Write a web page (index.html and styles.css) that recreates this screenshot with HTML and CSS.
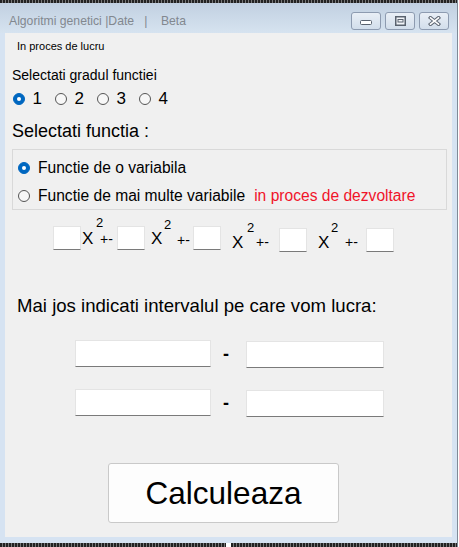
FILE: index.html
```html
<!DOCTYPE html>
<html>
<head>
<meta charset="utf-8">
<link rel="stylesheet" href="styles.css">
</head>
<body>
<div class="window">
  <div class="topstrip"></div>
  <div class="titlebar">
    <div class="title">Algoritmi genetici |Date   |    Beta</div>
    <div class="controls">
      <div class="cbtn cmin"><svg width="12" height="5" viewBox="0 0 12 5"><rect x="0.5" y="0.5" width="11" height="4" rx="1" fill="#ffffff" stroke="#59626e"/></svg></div>
      <div class="cbtn"><svg width="11" height="10" viewBox="0 0 11 10"><rect x="0.75" y="0.75" width="9.5" height="8.5" fill="#f2f5f9" stroke="#59626e" stroke-width="1.5"/><rect x="3" y="3.5" width="5" height="2.5" fill="none" stroke="#59626e"/></svg></div>
      <div class="cbtn"><svg width="13" height="10" viewBox="0 0 13 10"><path d="M2.5 1.8 L10.5 8.2 M10.5 1.8 L2.5 8.2" stroke="#5d6672" stroke-width="3.6" stroke-linecap="square" fill="none"/><path d="M2.5 1.8 L10.5 8.2 M10.5 1.8 L2.5 8.2" stroke="#ffffff" stroke-width="1.6" stroke-linecap="square" fill="none"/></svg></div>
    </div>
  </div>
  <div class="body">
    <div class="client">
      <div class="status">In proces de lucru</div>
      <div class="lbl">Selectati gradul functiei</div>
      <div class="degrees">
        <div class="deg"><span class="radio on"></span><span>1</span></div>
        <div class="deg"><span class="radio"></span><span>2</span></div>
        <div class="deg"><span class="radio"></span><span>3</span></div>
        <div class="deg"><span class="radio"></span><span>4</span></div>
      </div>
      <div class="heading">Selectati functia :</div>
      <div class="group">
        <div class="opt"><span class="radio on"></span><span>Functie de o variabila</span></div>
        <div class="opt"><span class="radio"></span><span>Functie de mai multe variabile</span><span class="red">in proces de dezvoltare</span></div>
      </div>
      <div class="poly">
        <span class="tb"></span><span class="x x1">X</span><span class="sup s1">2</span><span class="pm p1">+-</span>
        <span class="tb"></span><span class="x x2">X</span><span class="sup s2">2</span><span class="pm p2">+-</span>
        <span class="tb"></span><span class="x x3">X</span><span class="sup s3">2</span><span class="pm p3">+-</span>
        <span class="tb low"></span><span class="x x4">X</span><span class="sup s4">2</span><span class="pm p4">+-</span>
        <span class="tb low"></span>
      </div>
      <div class="heading2">Mai jos indicati intervalul pe care vom lucra:</div>
      <div class="range first-range">
        <span class="rb"></span><span class="dash">-</span><span class="rb rb2"></span>
      </div>
      <div class="range second-range">
        <span class="rb"></span><span class="dash">-</span><span class="rb rb2"></span>
      </div>
      <button class="calc">Calculeaza</button>
    </div>
  </div>
  <div class="bottom"><span class="grip"></span></div>
</div>
</body>
</html>
```
FILE: styles.css
```css
* { box-sizing: border-box; }
html, body { margin: 0; padding: 0; }
body {
  width: 459px;
  height: 547px;
  overflow: hidden;
  background: #ffffff;
  font-family: "Liberation Sans", Arial, sans-serif;
  color: #000;
}
.window {
  width: 458px;
  border-right: 1px solid #7f8a97;
}
.topstrip {
  height: 3px;
  background: repeating-linear-gradient(90deg, #222 0 2px, #777 2px 3px);
}
.titlebar {
  height: 30px;
  display: flex;
  justify-content: space-between;
  align-items: flex-start;
  background: linear-gradient(#c1d0e1, #d6e3f0);
}
.title {
  padding: 11px 0 0 9px;
  font-size: 12.2px;
  line-height: 14px;
  color: #82888f;
  white-space: pre;
}
.controls {
  display: flex;
  gap: 4px;
  margin: 9px 8px 0 0;
}
.cbtn {
  width: 30px;
  height: 18px;
  border: 1px solid #8d9bb0;
  border-radius: 3px;
  background: linear-gradient(#e9eff6, #d2deeb);
  display: flex;
  align-items: center;
  justify-content: center;
}
.cbtn svg { display: block; }
.cmin svg { margin-top: 3px; }
.body {
  display: flex;
  padding: 0 5px 6px;
  background: #d6e3f2;
}
.client {
  width: 447px;
  height: 504px;
  background: #f0f0f0;
  padding-top: 7px;
}
.bottom {
  height: 4px;
  background: repeating-linear-gradient(90deg, #222 0 2px, #777 2px 3px);
  display: flex;
  justify-content: center;
}
.grip { width: 5px; height: 4px; background: #fff; }

.status { margin-left: 12px; font-size: 11px; line-height: 13px; }
.lbl { margin: 14px 0 0 7px; font-size: 14px; line-height: 16px; }
.degrees {
  display: flex;
  align-items: center;
  margin: 7px 0 0 7.5px;
  height: 17px;
  font-size: 17px;
  line-height: 17px;
}
.deg { width: 42px; display: flex; align-items: center; gap: 8px; }
.radio {
  flex: none;
  width: 12px;
  height: 12px;
  border-radius: 50%;
  border: 1px solid #555;
  background: #f7f7f7;
}
.radio.on {
  background: #0067c0;
  border-color: #0067c0;
  display: flex;
  align-items: center;
  justify-content: center;
}
.radio.on::after {
  content: "";
  width: 4px;
  height: 4px;
  border-radius: 50%;
  background: #fff;
}
.heading { margin: 14px 0 0 7px; font-size: 18px; line-height: 21px; }
.group {
  margin: 7px 0 0 7px;
  width: 435px;
  height: 61px;
  border: 1px solid #d9d9d9;
  padding: 8px 0 0 5px;
  display: flex;
  flex-direction: column;
  gap: 8px;
}
.opt { display: flex; align-items: center; gap: 8px; height: 20px; font-size: 15.6px; line-height: 20px; white-space: nowrap; }
.red { color: #f0142a; margin-left: 1px; }

.poly {
  display: flex;
  align-items: flex-start;
  margin: 4px 0 0 48px;
  height: 38px;
}
.tb {
  flex: none;
  width: 28px;
  height: 24px;
  margin-top: 12px;
  background: #fff;
  border: 1px solid #e4e4e4;
  border-bottom-color: #7a7a7a;
}
.tb.low { margin-top: 14px; }
.x { flex: none; font-size: 17px; line-height: 16px; }
.sup { flex: none; font-size: 13px; line-height: 12px; }
.pm { flex: none; font-size: 14px; line-height: 13px; }
.x1 { margin: 17px 0 0 1px; width: 14px; }
.s1 { margin-top: 2.5px; width: 4px; }
.p1 { margin-top: 19.2px; width: 17px; }
.x2 { margin: 17px 0 0 6px; width: 13px; }
.s2 { margin-top: 4.5px; width: 13px; }
.p2 { margin-top: 20.2px; width: 16px; }
.x3 { margin: 21px 0 0 11px; width: 15px; }
.s3 { margin-top: 7.5px; width: 9px; }
.p3 { margin-top: 22.2px; width: 23px; }
.x4 { margin: 21px 0 0 11px; width: 13px; }
.s4 { margin-top: 7.5px; width: 14px; }
.p4 { margin-top: 22.2px; width: 21px; }

.heading2 { margin: 43px 0 0 12px; font-size: 18.6px; line-height: 21px; white-space: nowrap; }
.range { display: flex; align-items: flex-start; margin-left: 70px; height: 28px; }
.first-range { margin-top: 24px; }
.second-range { margin-top: 21px; }
.rb {
  flex: none;
  width: 136px;
  height: 27px;
  background: #fff;
  border: 1px solid #e4e4e4;
  border-bottom-color: #7a7a7a;
}
.rb2 { width: 138px; margin-top: 1px; }
.dash { flex: none; width: 35px; padding-left: 12px; font-size: 18px; line-height: 28px; font-weight: bold; }
.calc {
  display: block;
  margin: 46px 0 0 103px;
  width: 231px;
  height: 60px;
  padding: 0;
  background: #fdfdfd;
  border: 1px solid #c9c9c9;
  border-radius: 3px;
  font-family: "Liberation Sans", Arial, sans-serif;
  font-size: 31.5px;
  color: #000;
}
```
